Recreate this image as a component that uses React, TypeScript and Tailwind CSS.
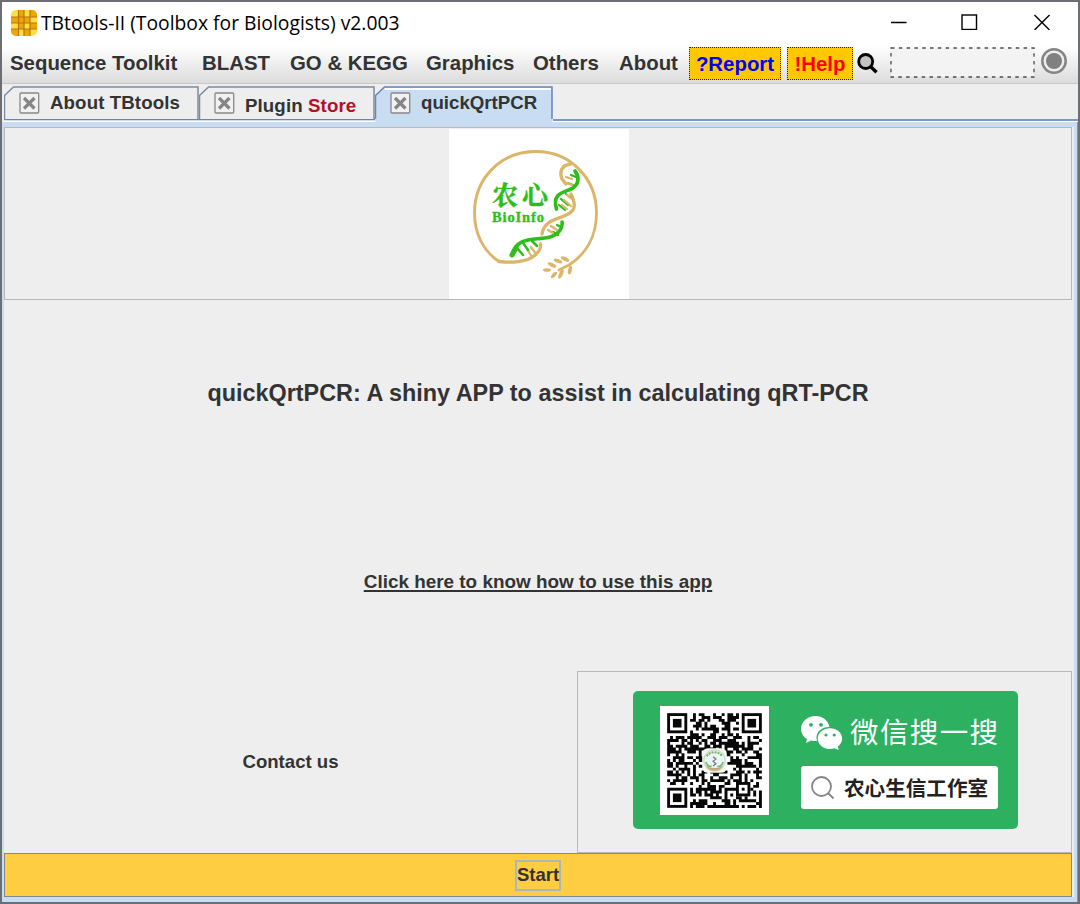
import React from "react";

const menuItems = [
  { label: "Sequence Toolkit", cls: "w-[192px]" },
  { label: "BLAST", cls: "w-[88px]" },
  { label: "GO & KEGG", cls: "w-[136px]" },
  { label: "Graphics", cls: "w-[107px]" },
  { label: "Others", cls: "w-[86px]" },
  { label: "About", cls: "w-[70px]" },
];

function AppIcon() {
  return (
    <svg width="26" height="26" viewBox="0 0 26 26" className="-mt-[2px]">
      <defs>
        <clipPath id="waffle"><rect width="26" height="26" rx="5" /></clipPath>
      </defs>
      <g clipPath="url(#waffle)">
        <rect width="26" height="26" fill="#ffdf45" />
        <path d="M8 0h5v7H8zM19 0h7v7h-7zM0 7h7v6H0zM13 7h6v6h-6zM0 19h7v7H0zM8 13h5v6H8zM19 13h7v6h-7zM13 19h6v7h-6zM7 7h6v6H7z" fill="#eaa900" />
        <path d="M7.500 0v26M13 0v26M19 0v26M0 7h26M0 13h26M0 19h26" stroke="#bd7016" strokeWidth="1.200" />
      </g>
    </svg>
  );
}

function TabClose() {
  return (
    <svg width="21" height="22" viewBox="0 0 21 22" className="shrink-0">
      <rect x="1" y="1" width="18.700" height="20" rx="1" fill="#f1f1f1" stroke="#85888b" strokeWidth="1.300" />
      <path d="M5 6l10.500 10.500M15.500 6L5 16.500" stroke="#858585" strokeWidth="3.200" />
    </svg>
  );
}

function TabShape({ width, active }: { width: number; active?: boolean }) {
  const stroke = active ? "#6684bd" : "#7c8c9e";
  return (
    <svg className="absolute left-0 top-0" width={width} height="36" viewBox={`0 0 ${width} 36`}>
      <path d={`M.500 36V9.500L9.500 1H${width - 1}V36`} fill={active ? "#c8ddf2" : "#eee"} />
      {active && <path d={`M9.500 3H${width - 2}`} stroke="#fff" strokeWidth="2" />}
      <path d={`M.500 33V9.500L9.500 1H${width - 1}V33`} fill="none" stroke={stroke} strokeWidth="1.500" />
      {!active && <path d={`M0 33.700H${width}`} stroke="#6684bd" strokeWidth="1.600" />}
      {!active && <path d={`M0 35.200H${width}`} stroke="#fff" strokeWidth="1.400" />}
    </svg>
  );
}

function Logo() {
  return (
    <svg width="180" height="170" viewBox="0 0 180 170" className="block bg-white">
      <g fill="none" strokeLinecap="round" strokeLinejoin="round">
        <path d="M50 132.500C34 122 25.500 104 25.500 84C25.500 49 52 22.500 87 22.500C121 22.500 147.500 49 147.500 84C147.500 107 137 125 120 136L110 141" stroke="#dbb56a" strokeWidth="2.900" />
        <path d="M122 35C113 36 110 42 113 50L117 55" stroke="#dbb56a" strokeWidth="3.500" />
        <path d="M50 132.500C62 134 78 133 85 127C91 122 92 119 91.500 115M93 105C96 87 117 91 124 81C127 76 124 69 122 65" stroke="#dbb56a" strokeWidth="3.300" />
        <path d="M63 126C68 106 87 112 101 108C110 105 114 99 113 93" stroke="#2dbe19" strokeWidth="3.500" />
        <path d="M107.500 80C103 65 113 64 122 60C131 56 130 47 126 42" stroke="#2dbe19" strokeWidth="3.700" />
        <path d="M110 76l6 5M112 70l7 6M117 65l5 4M119 54l7 3M122 46l5 2M104 103l5 3M108 96l4 2" stroke="#2dbe19" strokeWidth="2.200" />
        <path d="M117 48l6 2M118 54l5 2M118 66l5 4M115 71l7 6M113 76l5 4M99 101l5 3M102 97l6 4M78 120l5 8M82 118l5 7" stroke="#dbb56a" strokeWidth="2.200" />
        <path d="M68 119l6 7M74 114l5 7M83 112l5 5" stroke="#2dbe19" strokeWidth="2.500" />
        <path d="M63 126l4-7" stroke="#2dbe19" strokeWidth="5" />
      </g>
      <g fill="#dbb56a">
        <ellipse cx="98" cy="141" rx="4" ry="1.800" />
        <ellipse cx="103" cy="136" rx="4.500" ry="1.800" transform="rotate(25 103 136)" />
        <ellipse cx="109" cy="132" rx="4.500" ry="1.800" transform="rotate(20 109 132)" />
        <ellipse cx="116" cy="130" rx="4.500" ry="2" transform="rotate(25 116 130)" />
        <ellipse cx="105" cy="146" rx="4" ry="1.800" transform="rotate(-48 105 146)" />
        <ellipse cx="112" cy="145" rx="5" ry="1.900" transform="rotate(-65 112 145)" />
        <ellipse cx="121" cy="141" rx="4.500" ry="1.900" transform="rotate(-75 121 141)" />
      </g>
      <text x="43" y="75.500" fill="#2dbe19" stroke="#2dbe19" strokeWidth=".4" fontSize="26" fontWeight="700" fontFamily="'Noto Serif CJK SC','Noto Sans CJK SC',serif" textLength="56">农心</text>
      <text x="43" y="93" fill="#2dbe19" stroke="#2dbe19" strokeWidth=".3" fontSize="14.500" fontWeight="700" fontFamily="'Liberation Serif',serif" textLength="52">BioInfo</text>
    </svg>
  );
}

const QR_SIZE = 33;

function qrPath() {
  let seed = 20231;
  let path = "";
  for (let y = 0; y < QR_SIZE; y++) {
    for (let x = 0; x < QR_SIZE; x++) {
      seed = (seed * 48271) % 2147483647;
      const inFinder = (x < 8 && y < 8) || (x > 24 && y < 8) || (x < 8 && y > 24);
      const inAlign = x > 23 && x < 29 && y > 23 && y < 29;
      if (!inFinder && !inAlign && (seed >> 8) % 100 < 54) path += `M${x} ${y}h1.02v1.02h-1.02z`;
    }
  }
  return path;
}

function QrCode() {
  return (
    <svg width="109" height="109" viewBox="-2.500 -2.500 38 38" className="block bg-white">
      <path d={qrPath()} fill="#080808" />
      {[[0, 0], [26, 0], [0, 26]].map(([x, y]) => (
        <g key={`${x}-${y}`}>
          <rect x={x + 0.5} y={y + 0.5} width="6" height="6" fill="#fff" stroke="#080808" />
          <rect x={x + 2} y={y + 2} width="3" height="3" fill="#080808" />
        </g>
      ))}
      <rect x="24.500" y="24.500" width="4" height="4" fill="#fff" stroke="#080808" />
      <rect x="26" y="26" width="1" height="1" fill="#080808" />
      <rect x="12.200" y="12.200" width="8.600" height="8.600" rx="2" fill="#f5f7f3" />
      <circle cx="16.500" cy="16.500" r="3.700" fill="#eaf6f4" stroke="#cfdcc2" strokeWidth=".5" />
      <path d="M13.800 15a3.300 3.300 0 0 1 5.400 0" stroke="#78b06a" strokeWidth=".7" strokeDasharray=".7 .35" fill="none" />
      <path d="M16 15.200l1 .8-1 .8 1 .8-1 .8" stroke="#777" strokeWidth=".45" fill="none" />
      <path d="M13.500 18.300q3 1.600 6 0q-1 1.800-3 1.800t-3-1.800" fill="#c9a878" />
      <path d="M13.500 17q.5 1.800 2 1.500M19.500 17q-.5 1.800-2 1.500" stroke="#75bc88" strokeWidth=".6" fill="none" />
    </svg>
  );
}

function WeChat() {
  return (
    <svg width="42" height="35" viewBox="0 0 42 35" fill="#fff" className="shrink-0">
      <path d="M14.500 0C6.500 0 0 5.700 0 13c0 4.200 2.300 7.800 6 10.100L5 27l5-2.500c1.700.5 4 .7 6 .5-2.500-7.800 4-14.200 12.500-14C27.300 4.600 21.400 0 14.500 0z" />
      <path d="M29 12.200c-6.900 0-12.300 4.500-12.300 10.200S22.100 33 29 33c1.700 0 3.100-.3 4.500-.8L37.800 34l-1-3.500c2.700-2 4.300-4.800 4.300-8.100 0-5.700-5.200-10.200-12.100-10.200z" />
      <g fill="#2db160"><circle cx="10" cy="8.800" r="1.900" /><circle cx="20" cy="8.800" r="1.900" /><circle cx="25" cy="19" r="1.600" /><circle cx="33.200" cy="19" r="1.600" /></g>
    </svg>
  );
}

export default function App() {
  return (
    <div className="flex h-[904px] w-[1080px] flex-col overflow-hidden border-2 border-[#6d6e73] bg-[#eee] font-['Liberation_Sans',Arial,sans-serif] text-[#333]">
      <header className="flex h-11 shrink-0 items-center bg-white pl-[9px] text-black">
        <AppIcon />
        <span className="ml-[4px] -mt-[2px] whitespace-nowrap font-['Open_Sans','Noto_Sans',sans-serif] text-[19.300px]">TBtools-II (Toolbox for Biologists) v2.003</span>
        <svg className="-mt-[6px] mr-[28px] ml-auto shrink-0" width="160" height="18" viewBox="0 0 160 18" fill="none" stroke="#000" strokeWidth="1.400">
          <path d="M1 10.500h15.500M144.500 3l15 15M159.500 3l-15 15" />
          <rect x="72" y="3" width="14.500" height="14.500" />
        </svg>
      </header>

      <nav className="flex h-[38px] shrink-0 items-start border-b border-[#c8c8c8] bg-gradient-to-b from-white to-[#dcdcdc] pl-2 text-[20.400px] leading-[34px] font-bold">
        {menuItems.map((m) => <span key={m.label} className={`${m.cls} shrink-0 whitespace-nowrap`}>{m.label}</span>)}
        <button className="mt-px h-[33px] w-[92px] shrink-0 border border-dotted border-[#332800] bg-[#ffc800] leading-[30px] text-[#0000ff]">?Report</button>
        <button className="mt-px ml-[6px] h-[33px] w-[66px] shrink-0 border border-dotted border-[#332800] bg-[#ffc800] leading-[30px] text-[#ff0000]">!Help</button>
        <svg className="ml-1 mt-[7px] shrink-0" width="21" height="21" viewBox="0 0 21 21">
          <path d="M14 14l5.500 5.200" stroke="#000" strokeWidth="3.400" />
          <circle cx="8.700" cy="8.500" r="7" fill="#c2c2c2" stroke="#000" strokeWidth="2.800" />
        </svg>
        <svg className="ml-[12px] mt-px shrink-0" width="145" height="31" viewBox="0 0 145 31">
          <rect x="1" y="1" width="143" height="29" fill="#f3f3f3" stroke="#4c4c4c" strokeWidth="1.300" strokeDasharray="3.500 4.300" />
        </svg>
        <svg className="ml-[6px] mt-[2px] shrink-0" width="26" height="26" viewBox="0 0 26 26">
          <circle cx="13" cy="13" r="11.700" fill="#eee" stroke="#858585" strokeWidth="2.500" />
          <circle cx="13" cy="13" r="8" fill="#808080" />
        </svg>
      </nav>

      <div className="flex h-[38px] shrink-0 items-end pl-[2px] text-[18.700px] font-bold">
        <div className="relative h-9 w-[195px]">
          <TabShape width={195} />
          <div className="relative flex h-full pl-[15px] pt-[6px]"><TabClose /><span className="ml-[10px] leading-[22px] tracking-[.1px]">About TBtools</span></div>
        </div>
        <div className="relative h-9 w-[176px]">
          <TabShape width={176} />
          <div className="relative flex h-full pl-[15px] pt-[6px]"><TabClose /><span className="ml-[10px] pt-[2px] leading-[23px] tracking-[.1px]">Plugin <span className="text-[#b0122b]">Store</span></span></div>
        </div>
        <div className="relative h-9 w-[178px]">
          <TabShape width={178} active />
          <div className="relative flex h-full pl-[15px] pt-[6px]"><TabClose /><span className="ml-[10px] leading-[22px]">quickQrtPCR</span></div>
        </div>
        <div className="h-[3px] flex-1 border-t-2 border-[#7b96c9] bg-white" />
      </div>

      <main className="flex min-h-0 flex-1 flex-col border-r border-[#7895c4] bg-[#c8ddf2] pr-[3px] pl-[2px] pt-[5px] pb-[5px]">
        <div className="flex min-h-0 flex-1 flex-col bg-[#eee] pr-[2px]">
          <section className="flex h-[173px] shrink-0 justify-center border border-[#b8b8b8] bg-[#eee] pt-px pl-px"><Logo /></section>
          <section className="flex h-[187px] shrink-0 items-center justify-center text-[23.400px] font-bold">quickQrtPCR: A shiny APP to assist in calculating qRT-PCR</section>
          <section className="flex h-[184px] shrink-0 items-center justify-center pt-[6px]">
            <a className="text-[18.900px] font-bold underline decoration-[1.500px] underline-offset-[2px]">Click here to know how to use this app</a>
          </section>
          <section className="flex h-[182px] shrink-0">
            <div className="flex w-[573px] items-center justify-center text-[18.600px] font-bold">Contact us</div>
            <div className="flex flex-1 items-start justify-center border border-[#b8b8b8] pt-[19px] pl-[2px]">
              <div className="flex h-[138px] w-[385px] rounded-[5px] bg-[#2db160] pt-[15px] pl-[27px]">
                <QrCode />
                <div className="ml-[32px] flex flex-col">
                  <div className="flex h-[60px] items-start pt-[10px]">
                    <WeChat />
                    <span className="ml-[7px] -mt-[2px] whitespace-nowrap font-['Noto_Sans_CJK_SC',sans-serif] text-[28.500px] leading-[34px] tracking-[1.400px] text-white">微信搜一搜</span>
                  </div>
                  <div className="flex h-[43px] w-[197px] items-center rounded-[3px] bg-white pl-[10px]">
                    <svg width="24" height="24" viewBox="0 0 24 24" fill="none" stroke="#858585" strokeWidth="1.800"><circle cx="10.500" cy="10.500" r="9.500" /><path d="M17 17l5.500 5.500" /></svg>
                    <span className="ml-[9px] whitespace-nowrap font-['Noto_Sans_CJK_SC',sans-serif] text-[20.600px] font-bold text-[#222]">农心生信工作室</span>
                  </div>
                </div>
              </div>
            </div>
          </section>
          <button className="flex h-[44px] shrink-0 items-center justify-center border border-[#7f8b91] bg-[#ffcd42] text-[18.500px] font-bold">
            <span className="flex h-[31px] w-[46px] items-center justify-center border-2 border-[#a9b8bc]">Start</span>
          </button>
        </div>
      </main>
    </div>
  );
}
